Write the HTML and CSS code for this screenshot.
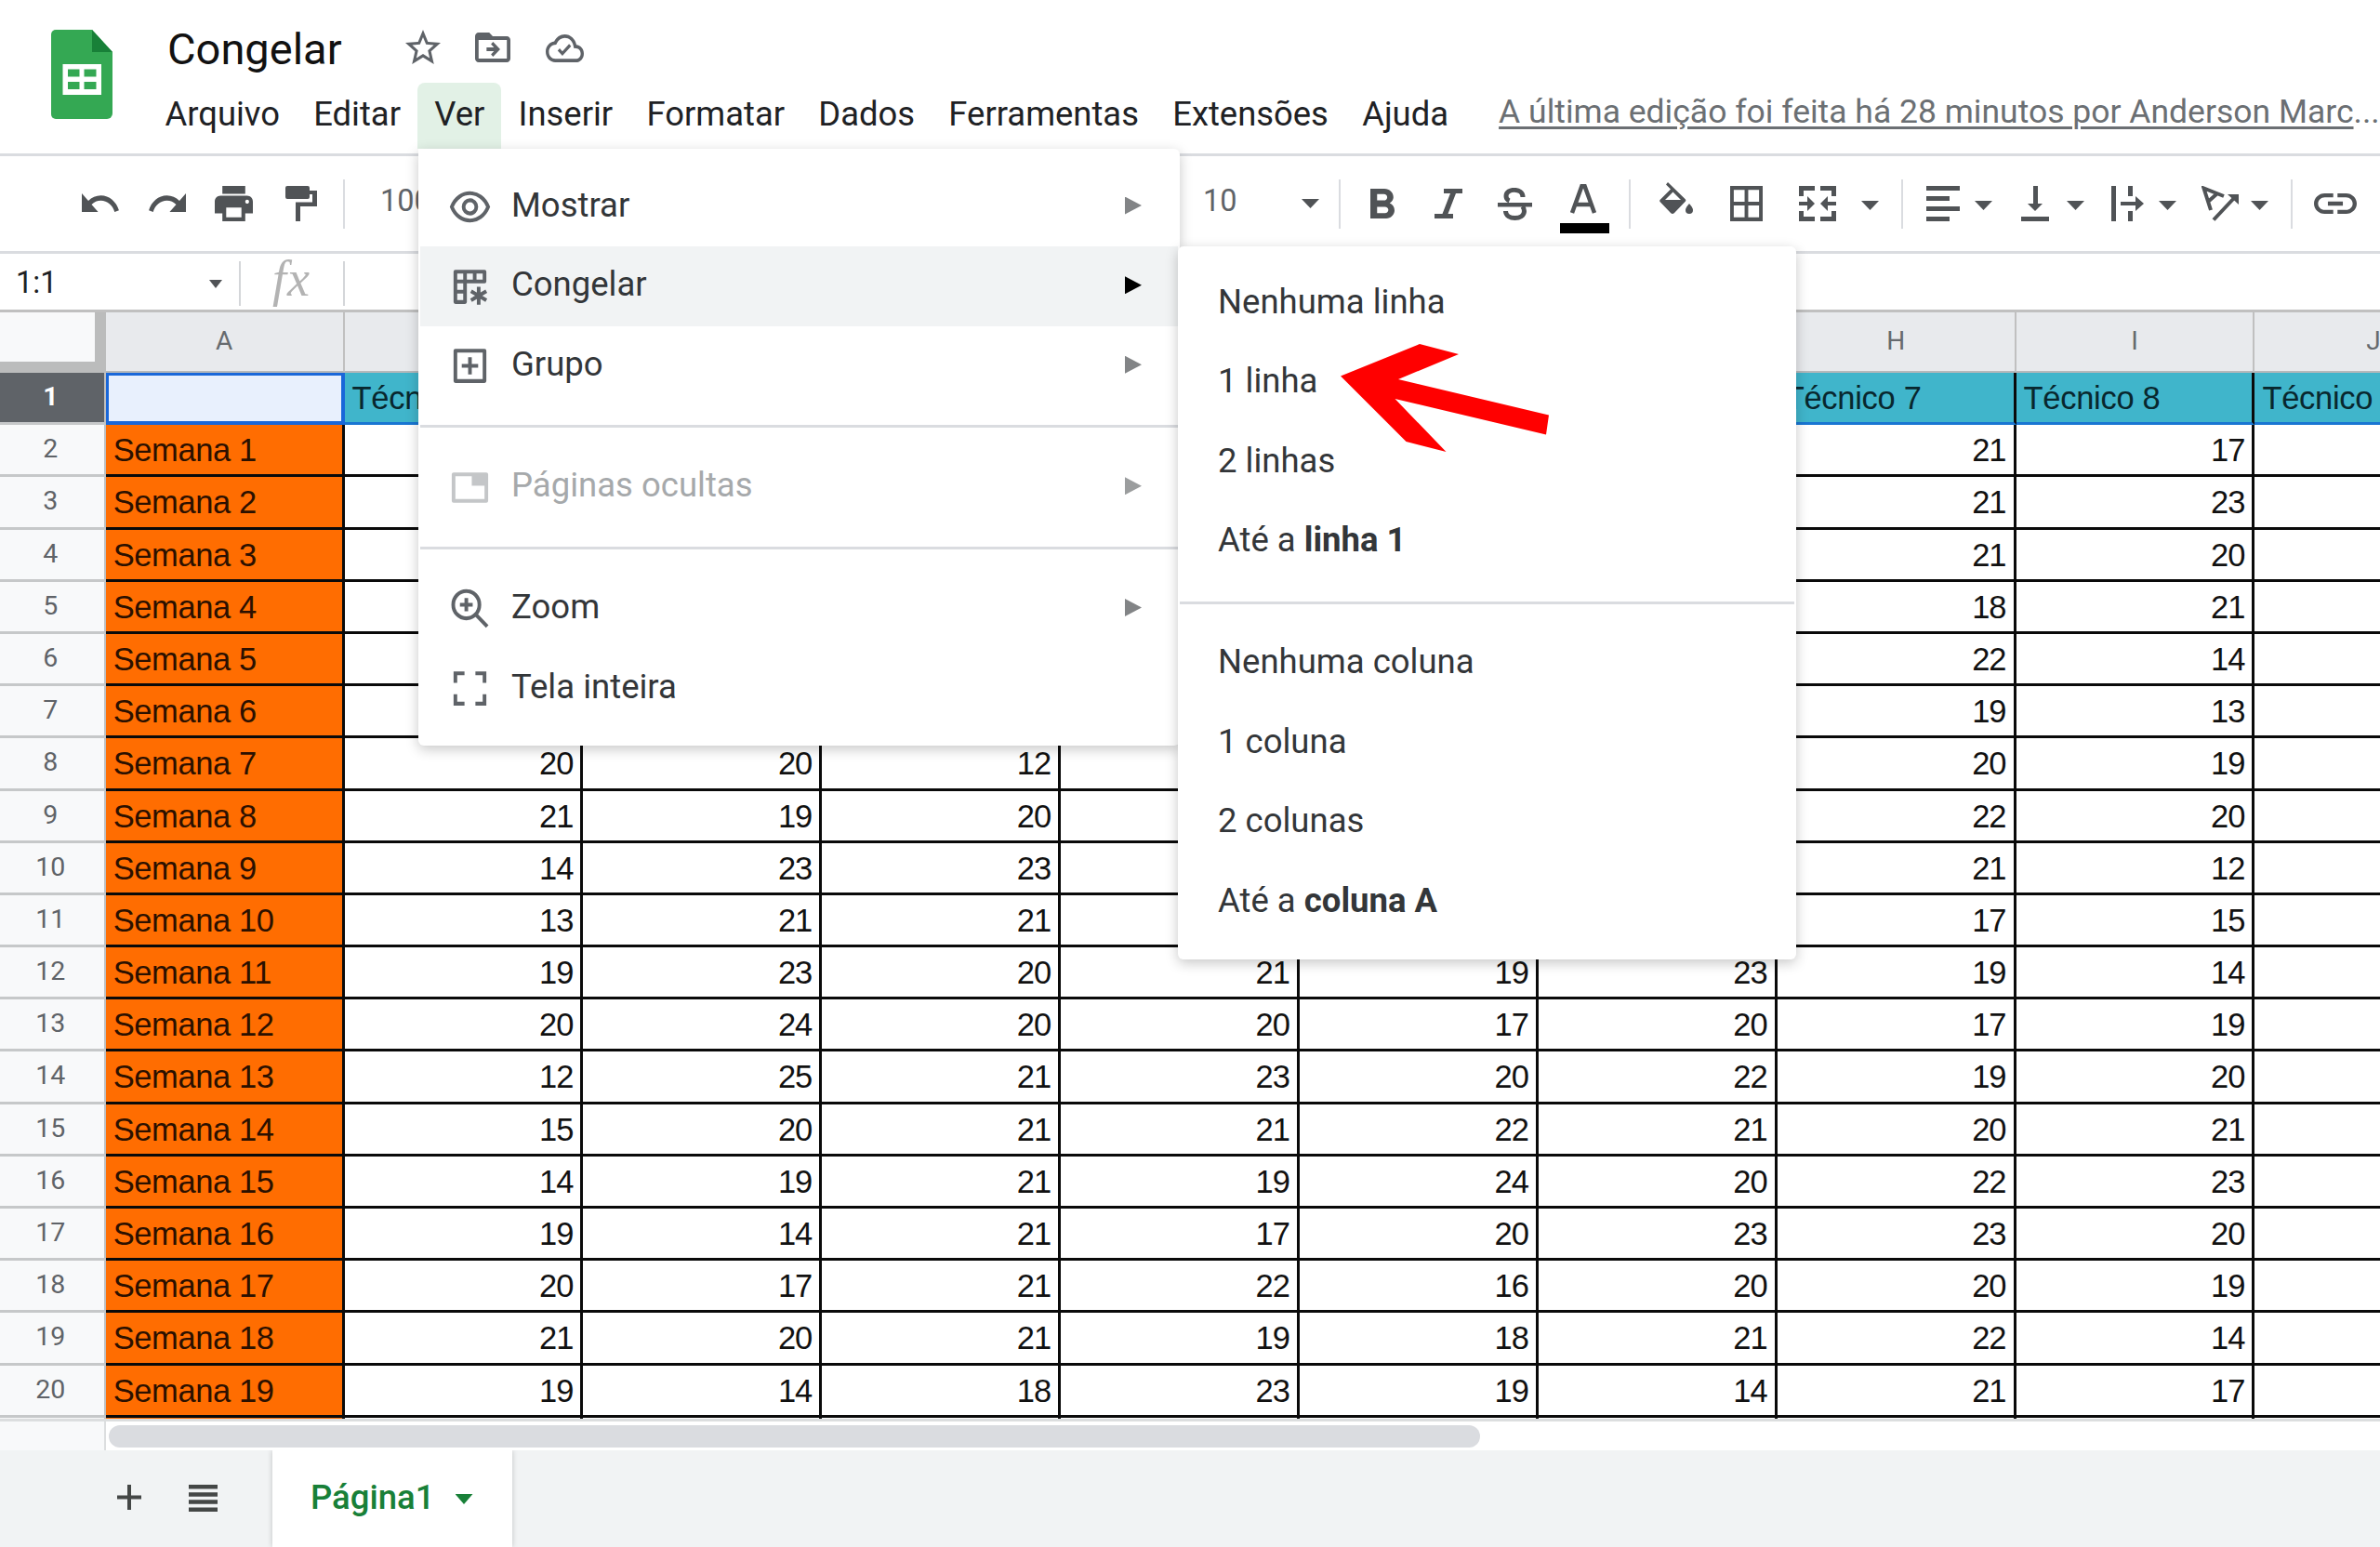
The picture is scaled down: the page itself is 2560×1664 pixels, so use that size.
FILE: index.html
```
<!DOCTYPE html>
<html lang="pt-BR">
<head>
<meta charset="utf-8">
<title>Congelar</title>
<link rel="stylesheet" href="styles.css">
</head>
<body>
<div class="app">
  <header class="top">
    <svg class="logo" viewBox="0 0 66 96"><path fill="#34a853" d="M5 0h39l22 24v66a6 6 0 0 1-6 6H5a5 5 0 0 1-5-5V5a5 5 0 0 1 5-5z"/><path fill="#188038" d="M44 0l22 24H44z"/><path fill="#fff" fill-rule="evenodd" d="M12.500 37h41.500v33H12.500zM18 42.500v8h12.500v-8zM35.500 42.500v8H48.500v-8zM18 56v8h12.500v-8zM35.500 56v8H48.500v-8z"/></svg>
    <div class="heading">
      <div class="title-row">
        <h1 class="title">Congelar</h1>
        <svg class="t-star" viewBox="2 2 20 19" preserveAspectRatio="none"><path d="M22 9.240l-7.190-.62L12 2 9.190 8.630 2 9.240l5.460 4.730L5.820 21 12 17.270 18.180 21l-1.630-7.030L22 9.240zM12 15.400l-3.760 2.270 1-4.280-3.320-2.880 4.380-.38L12 6.100l1.710 4.040 4.380.38-3.320 2.880 1 4.280L12 15.400z"/></svg>
        <svg class="t-folder" viewBox="2 4 20 16" preserveAspectRatio="none"><path d="M20 6h-8l-2-2H4c-1.100 0-2 .9-2 2v12c0 1.100.9 2 2 2h16c1.100 0 2-.9 2-2V8c0-1.100-.9-2-2-2zm0 12H4V8h16v10z"/><path d="M12.200 17l4-4-4-4-1.200 1.200 1.700 1.800H8.500v2h4.200L11 15.800z"/></svg>
        <svg class="t-cloud" viewBox="0 4 24 16" preserveAspectRatio="none"><path d="M19.350 10.040C18.670 6.590 15.640 4 12 4 9.110 4 6.600 5.640 5.350 8.040 2.340 8.360 0 10.910 0 14c0 3.310 2.690 6 6 6h13c2.760 0 5-2.240 5-5 0-2.640-2.050-4.780-4.650-4.960zM19 18H6c-2.210 0-4-1.790-4-4 0-2.050 1.530-3.760 3.560-3.970l1.070-.11.5-.95C8.080 7.140 9.940 6 12 6c2.620 0 4.880 1.860 5.390 4.430l.3 1.500 1.530.11c1.560.1 2.780 1.410 2.780 2.960 0 1.650-1.350 3-3 3z"/><path d="M10.500 16.300l-3-3 1.300-1.300 1.700 1.700 4.200-4.200 1.300 1.300z"/></svg>
      </div>
      <nav class="menubar">
        <span>Arquivo</span><span>Editar</span><span class="open">Ver</span><span>Inserir</span><span>Formatar</span><span>Dados</span><span>Ferramentas</span><span>Extensões</span><span>Ajuda</span>
        <a class="last-edit"><u>A última edição foi feita há 28 minutos por Anderson Marc</u>...</a>
      </nav>
    </div>
  </header>

  <div class="toolbar">
    <div class="tools-left">
      <svg class="i-undo" viewBox="2 7 20.500 9" preserveAspectRatio="none"><path d="M12.500 8c-2.650 0-5.050.99-6.900 2.600L2 7v9h9l-3.620-3.620c1.390-1.160 3.160-1.880 5.120-1.880 3.540 0 6.550 2.310 7.600 5.500l2.370-.78C21.080 11.030 17.150 8 12.500 8z"/></svg>
      <svg class="i-redo" viewBox="1.500 7 20.500 9" preserveAspectRatio="none"><path d="M18.400 10.600C16.550 8.990 14.150 8 11.500 8c-4.650 0-8.580 3.030-9.960 7.220L3.900 16c1.050-3.190 4.050-5.500 7.600-5.500 1.950 0 3.730.72 5.120 1.880L13 16h9V7l-3.600 3.600z"/></svg>
      <svg class="i-print" viewBox="2 3 20 18" preserveAspectRatio="none"><path d="M19 8H5c-1.660 0-3 1.340-3 3v6h4v4h12v-4h4v-6c0-1.660-1.340-3-3-3zm-3 11H8v-5h8v5zm3-7c-.55 0-1-.45-1-1s.45-1 1-1 1 .45 1 1-.45 1-1 1zm-1-9H6v4h12V3z"/></svg>
      <svg class="i-paint" viewBox="0 0 34 38" preserveAspectRatio="none"><path d="M2 0h22a2 2 0 0 1 2 2v3h8v17H16v16h-5V17.500h18V9h-3v3a2 2 0 0 1-2 2H2a2 2 0 0 1-2-2V2a2 2 0 0 1 2-2z"/></svg>
      <i class="sep"></i>
      <span class="tool-text">100%</span>
    </div>
    <span class="tool-text size">10</span>
    <i class="caret c-size"></i>
    <i class="sep s-size"></i>
    <svg class="i-bold" viewBox="7 5 10.750 14" preserveAspectRatio="none"><path d="M15.600 11.790c.97-.67 1.650-1.770 1.650-2.790 0-2.260-1.750-4-4-4H7v14h7.040c2.090 0 3.710-1.700 3.710-3.790 0-1.520-.86-2.820-2.150-3.420zM10 7.500h3c.83 0 1.500.67 1.500 1.500s-.67 1.500-1.500 1.500h-3v-3zm3.500 9H10v-3h3.500c.83 0 1.500.67 1.500 1.500s-.67 1.500-1.500 1.500z"/></svg>
    <svg class="i-italic" viewBox="0 0 30 32" preserveAspectRatio="none"><path d="M10 0h20v5h-7l-8.500 22H20v5H0v-5h8.500L17 5h-7z"/></svg>
    <svg class="i-strike" viewBox="0 0 37 35" preserveAspectRatio="none"><path d="M0 16h37v4.500H0z"/><path fill="none" stroke="#505356" stroke-width="5" d="M27 10c0-10-18-10-18-1 0 2 1 4 3.500 5M8.500 25c0 10 20 10 20 0 0-3-1-4-2-5"/></svg>
    <svg class="i-color" viewBox="0 0 53 53"><path fill="none" stroke="#505356" stroke-width="4.500" d="M13 31L23.500 2h3L37 31M17 22h16"/><path fill="#000" d="M0 42h53v11H0z"/></svg>
    <i class="sep s-color"></i>
    <svg class="i-fill" viewBox="0 0 36 34" preserveAspectRatio="none"><path fill-rule="evenodd" d="M9 0l18.500 18a2 2 0 0 1 0 3L16 33a3 3 0 0 1-4 0L1 21.500a2 2 0 0 1 0-3L12 7.500 7 2.500zM14.500 10.500L6 19h17z"/><path d="M32 23s4 4 4 7a4 4 0 0 1-8 0c0-3 4-7 4-7z"/></svg>
    <svg class="i-border" viewBox="3 3 18 18" preserveAspectRatio="none"><path d="M3 3v18h18V3H3zm8 16H5v-6h6v6zm0-8H5V5h6v6zm8 8h-6v-6h6v6zm0-8h-6V5h6v6z"/></svg>
    <svg class="i-merge" viewBox="0 0 40 38" preserveAspectRatio="none"><path d="M0 0h17v5H5v6H0zM40 0H23v5h12v6h5zM0 38h17v-5H5v-6H0zM40 38H23v-5h12v-6h5zM0 17h9v-6l8 8-8 8v-6H0zM40 17h-9v-6l-8 8 8 8v-6h9z"/></svg>
    <i class="caret c-merge"></i>
    <i class="sep s-merge"></i>
    <svg class="i-align" viewBox="0 0 36 38"><path d="M0 0h36v5H0zM0 11h25v5H0zM0 22h36v5H0zM0 33h25v5H0z"/></svg>
    <i class="caret c-near"></i>
    <svg class="i-valign" viewBox="0 0 30 38"><path d="M13 0h5v19h5l-8 8-8-8h6zM0 33h30v5H0z"/></svg>
    <i class="caret c-valign"></i>
    <svg class="i-wrap" viewBox="0 0 35 38"><path d="M0 0h5v38H0zM18 0h5v11h-5zM18 27h5v11h-5zM10 17h16v-6l9 8-9 8v-6H10z"/></svg>
    <i class="caret c-near"></i>
    <svg class="i-rotate" viewBox="0 0 40 38"><path fill="none" stroke="#505356" stroke-width="4" d="M24 11L2.500 2.500 10 26M7 17l9-8M13 36.500L36 12"/><path d="M28 9h12v11z"/></svg>
    <i class="caret c-rotate"></i>
    <i class="sep s-rotate"></i>
    <svg class="i-link" viewBox="2 7 20 10" preserveAspectRatio="none"><path d="M3.900 12c0-1.710 1.390-3.100 3.100-3.100h4V7H7c-2.760 0-5 2.240-5 5s2.240 5 5 5h4v-1.900H7c-1.710 0-3.100-1.390-3.100-3.100zM8.500 13h7v-2h-7v2zm8.500-6h-4v1.900h4c1.710 0 3.100 1.390 3.100 3.100s-1.390 3.100-3.100 3.100h-4V17h4c2.760 0 5-2.240 5-5s-2.240-5-5-5z"/></svg>
  </div>

  <div class="formula">
    <span class="name-box">1:1</span><i class="caret small"></i><i class="sep f1"></i><span class="fx">fx</span><i class="sep f2"></i>
  </div>

  <main class="sheet" id="sheet"></main>

  <div class="scroll"><div class="scroll-corner"></div><div class="scroll-thumb"></div></div>

  <footer class="tabs">
    <svg class="b-plus" viewBox="0 0 26 27"><path d="M11 0h4v11.500h11v4H15V27h-4V15.500H0v-4h11z"/></svg>
    <svg class="b-list" viewBox="0 0 31 29"><path d="M0 0h31v4.500H0zM0 8.200h31v4.500H0zM0 16.300h31v4.500H0zM0 24.500h31V29H0z"/></svg>
    <div class="tab">Página1<i class="caret green"></i></div>
  </footer>
</div>

<div class="menu main-menu">
  <div class="item"><svg class="mi" viewBox="0 0 24 24" preserveAspectRatio="none"><path fill="none" stroke="#5f6368" stroke-width="2" d="M2 12c4-9.600 16-9.600 20 0-4 9.600-16 9.600-20 0z"/><circle cx="12" cy="12" r="3.500" fill="none" stroke="#5f6368" stroke-width="2"/></svg>Mostrar<i class="arrow"></i></div>
  <div class="item hover"><svg class="mi" viewBox="0 0 24 24" preserveAspectRatio="none"><path fill="none" stroke="#5f6368" stroke-width="2" stroke-linejoin="round" d="M4 4h16v5.200H9.300V20H4zM9.300 4v5.200H4M14.600 4v5.200M4 14.600h5.300"/><path fill="none" stroke="#5f6368" stroke-width="2" d="M16.800 12v9.400M12.600 14.300l8.400 4.800M21 14.300l-8.400 4.800"/></svg>Congelar<i class="arrow"></i></div>
  <div class="item"><svg class="mi" viewBox="0 0 24 24" preserveAspectRatio="none"><path fill="none" stroke="#5f6368" stroke-width="2" stroke-linejoin="round" d="M4 4h16v16H4zM12 7.500v9M7.500 12h9"/></svg>Grupo<i class="arrow"></i></div>
  <hr>
  <div class="item off"><svg class="mi" viewBox="0 0 24 24" preserveAspectRatio="none"><path fill="none" stroke="#c4c6c8" stroke-width="2" stroke-linejoin="round" d="M3 5h18v14H3z"/><path fill="#c4c6c8" d="M13 5h8v6h-8z"/></svg>Páginas ocultas<i class="arrow"></i></div>
  <hr>
  <div class="item"><svg class="mi" viewBox="0 0 24 24" preserveAspectRatio="none"><circle cx="10" cy="10" r="7.200" fill="none" stroke="#5f6368" stroke-width="2"/><path fill="none" stroke="#5f6368" stroke-width="2" d="M15 15l6.500 6.500M10 6.500v7M6.500 10h7"/></svg>Zoom<i class="arrow"></i></div>
  <div class="item"><svg class="mi" viewBox="0 0 24 24" preserveAspectRatio="none"><path fill="none" stroke="#5f6368" stroke-width="2" d="M4 9V4h5M15 4h5v5M20 15v5h-5M9 20H4v-5"/></svg>Tela inteira</div>
</div>

<div class="menu sub-menu">
  <div class="item">Nenhuma linha</div>
  <div class="item">1 linha</div>
  <div class="item">2 linhas</div>
  <div class="item"><span>Até a <b>linha 1</b></span></div>
  <hr>
  <div class="item">Nenhuma coluna</div>
  <div class="item">1 coluna</div>
  <div class="item">2 colunas</div>
  <div class="item"><span>Até a <b>coluna A</b></span></div>
</div>

<svg class="pointer" viewBox="0 0 226 117"><path fill="#f00" d="M0 35.500L85 1l42 11-65 27 162 38.500-3 21L58.500 60 113.500 117 70.500 106z"/></svg>
<script src="sheet.js"></script>
</body>
</html>
```
FILE: styles.css
```
* { box-sizing: border-box; }
html, body { margin: 0; width: 2560px; height: 1664px; overflow: hidden; background: #fff; }
body { position: relative; font-family: Roboto, "Liberation Sans", sans-serif; color: #202124; }
svg { display: block; flex: none; fill: #444746; }
.app { display: flex; flex-direction: column; width: 2560px; height: 1664px; overflow: hidden; }

.top { display: flex; height: 168px; border-bottom: 3px solid #dadce0; flex: none; }
.logo { width: 66px; height: 96px; margin: 32px 0 0 55px; }
.heading { margin-left: 39px; }
.title-row { display: flex; height: 89px; }
.title-row svg { fill: #5f6368; }
.title { margin: 0 0 0 20px; width: 256px; font-size: 47px; font-weight: 400; line-height: 54px; padding-top: 26px; color: #111; }
.t-star { width: 38px; height: 37px; margin-top: 32px; }
.t-folder { width: 38px; height: 32px; margin: 35px 0 0 37px; }
.t-cloud { width: 41px; height: 30px; margin: 37px 0 0 38px; }
.menubar { display: flex; height: 71px; font-size: 36.400px; line-height: 68px; white-space: nowrap; color: #202124; }
.menubar span { padding: 0 18.150px; }
.menubar span:first-child { padding-left: 17.500px; }
.menubar .open { background: #e2f1e6; border-radius: 8px 8px 0 0; }
.last-edit { margin-left: 36px; font-size: 35.500px; line-height: 63px; color: #6b6f73; }
.last-edit u { text-decoration-thickness: 2.500px; text-underline-offset: 4px; }

.toolbar { display: flex; align-items: flex-start; height: 106px; margin-top: -1px; border-bottom: 3px solid #dadce0; flex: none; color: #5f6368; }
.toolbar svg { fill: #505356; }
.tools-left { display: flex; align-items: flex-start; width: 1294px; }
.tool-text { font-size: 32.500px; line-height: 38px; margin-top: 30px; }
.tools-left .tool-text { margin-left: 38px; }
.sep { display: block; flex: none; width: 2px; height: 53px; margin-top: 26px; background: #dadce0; }
.tools-left .sep { margin-left: 28px; }
.caret { display: block; flex: none; width: 19px; height: 10px; margin-top: 49px; background: #505356; clip-path: polygon(0 0, 100% 0, 50% 100%); }
.i-undo { width: 40px; height: 20px; margin: 41px 0 0 88px; }
.i-redo { width: 40px; height: 20px; margin: 41px 0 0 32px; }
.i-print { width: 41px; height: 38px; margin: 33px 0 0 31px; }
.i-paint { width: 34px; height: 38px; margin: 33px 0 0 35px; }
.size { width: 106px; }
.c-size { margin-top: 47px; }
.s-size { margin-left: 21px; }
.i-bold { width: 26px; height: 32px; margin: 36px 0 0 32px; }
.i-italic { width: 30px; height: 32px; margin: 36px 0 0 43px; }
.i-strike { width: 37px; height: 35px; margin: 35px 0 0 38px; }
.i-color { width: 53px; height: 53px; margin: 31px 0 0 30px; }
.s-color { margin-left: 21px; }
.i-fill { width: 36px; height: 34px; margin: 29px 0 0 31px; }
.i-border { width: 35px; height: 38px; margin: 33px 0 0 40px; }
.i-merge { width: 40px; height: 38px; margin: 33px 0 0 39px; }
.c-merge { margin-left: 27px; }
.s-merge { margin-left: 24px; }
.i-align { width: 36px; height: 38px; margin: 33px 0 0 25px; }
.c-near { margin-left: 16px; }
.i-valign { width: 30px; height: 38px; margin: 33px 0 0 31px; }
.c-valign { margin-left: 19px; }
.i-wrap { width: 35px; height: 38px; margin: 33px 0 0 29px; }
.i-rotate { width: 40px; height: 38px; margin: 33px 0 0 27px; }
.c-rotate { margin-left: 13px; }
.s-rotate { margin-left: 24px; }
.i-link { width: 46px; height: 22px; margin: 41px 0 0 23px; }

.formula { display: flex; height: 63px; border-bottom: 3px solid #c0c0c0; flex: none; }
.name-box { width: 225px; padding-left: 17px; font-size: 32.500px; line-height: 62px; }
.small { width: 14px; height: 9px; margin-top: 28px; }
.f1, .f2 { height: 48px; margin-top: 8px; background: #d4d6d9; }
.f1 { margin-left: 18px; }
.fx { width: 110px; padding-left: 34px; font: italic 54px/54px "Liberation Serif", serif; letter-spacing: 1px; color: #b3b3b3; }

.sheet { display: grid; grid-template-columns: 113.700px repeat(10, 256.860px); grid-template-rows: 65px; grid-auto-rows: 56.200px; height: 1190px; overflow: hidden; flex: none; width: 2560px; }
.corner { background: #f8f9fa; border: solid #bbbcbc; border-width: 0 12px 12px 0; }
.col { background: #e8eaed; border-right: 2px solid #c0c0c0; border-bottom: 2px solid #b5b8ba; text-align: center; font-size: 28px; line-height: 61px; color: #666a6e; }
.row { background: #f8f9fa; border-right: 2px solid #c0c0c0; border-bottom: 3px solid #c6c8c9; text-align: center; padding-right: 3px; font-size: 28.500px; line-height: 51px; color: #5f6368; }
.row.sel { background: #5f6368; color: #fff; font-weight: 700; }
.cell { border-right: 3px solid #0a0a0a; border-bottom: 3px solid #0a0a0a; text-align: right; padding: 0 8px; font: 34.500px/55px "Liberation Sans", Arial, sans-serif; letter-spacing: -1px; color: #111; white-space: nowrap; overflow: hidden; }
.week { background: #ff6d01; text-align: left; padding: 0 8px; letter-spacing: -.4px; color: #2b1000; }
.tech { background: #40b5cb; border-bottom-color: #1976d2; text-align: left; padding: 0 8px; letter-spacing: -.3px; color: #08272e; }
.a1 { background: #e8f0fd; border: solid #1967d9; border-width: 3px 4px 4px 3px; }

.scroll { display: flex; height: 34px; border-top: 3px solid #dcdedf; flex: none; background: #fff; }
.scroll-corner { width: 114px; background: #f8f9fa; border-right: 2px solid #dcdedf; }
.scroll-thumb { width: 1475px; height: 24px; margin: 4px 0 0 3px; border-radius: 12px; background: #dadce0; }

.tabs { display: flex; flex: 1; background: #f1f3f4; }
.tabs svg { fill: #444746; }
.b-plus { width: 26px; height: 27px; margin: 37px 0 0 126px; }
.b-list { width: 31px; height: 29px; margin: 37px 0 0 51px; }
.tab { display: flex; width: 258px; margin-left: 59px; padding-left: 41px; background: #fff; box-shadow: 0 0 6px #00000033; font-size: 36.500px; font-weight: 500; line-height: 101px; color: #188038; clip-path: inset(0 -8px 0 -8px); }
.green { background: #188038; margin: 47px 0 0 22px; height: 11px; }

.menu { position: absolute; background: #fff; border-radius: 6px; padding: 19.500px 2px 0; box-shadow: 0 4px 14px #00000038; font-size: 36.500px; color: #333639; }
.main-menu { left: 450px; top: 160px; width: 819px; height: 642px; border-top-left-radius: 0; }
.sub-menu { left: 1267px; top: 265px; width: 665px; height: 767px; padding-top: 18.500px; }
.item { display: flex; align-items: center; height: 85.600px; padding-bottom: 4.500px; white-space: nowrap; }
.main-menu .item { padding-left: 30px; }
.sub-menu .item { padding-left: 41px; }
.hover { background: #f1f3f4; }
.off { color: #a6a9ab; }
.menu hr { margin: 21px 0; border: 0; height: 3px; background: #dadce0; }
.mi { width: 47px; height: 49px; margin: 5px 21px 0 0; }
.arrow { width: 18px; height: 19px; margin: 2px 39px 0 auto; background: #828486; clip-path: polygon(0 0, 100% 50%, 0 100%); }
.hover .arrow { background: #000; }
.off .arrow { background: #9b9d9e; }
.pointer { position: absolute; left: 1442px; top: 369px; width: 226px; height: 117px; }
```
FILE: sheet.js
```
const sheet = document.getElementById('sheet');
const add = (cls, text = '') => {
  const el = document.createElement('div');
  el.className = cls;
  el.textContent = text;
  sheet.append(el);
};

// Columns B to I, one line per week.
const weeks = [
  ['', '', '', '', '', '', 21, 17],
  ['', '', '', '', '', '', 21, 23],
  ['', '', '', '', '', '', 21, 20],
  ['', '', '', '', '', '', 18, 21],
  ['', '', '', '', '', '', 22, 14],
  ['', '', '', '', '', '', 19, 13],
  [20, 20, 12, '', '', '', 20, 19],
  [21, 19, 20, '', '', '', 22, 20],
  [14, 23, 23, '', '', '', 21, 12],
  [13, 21, 21, '', '', '', 17, 15],
  [19, 23, 20, 21, 19, 23, 19, 14],
  [20, 24, 20, 20, 17, 20, 17, 19],
  [12, 25, 21, 23, 20, 22, 19, 20],
  [15, 20, 21, 21, 22, 21, 20, 21],
  [14, 19, 21, 19, 24, 20, 22, 23],
  [19, 14, 21, 17, 20, 23, 23, 20],
  [20, 17, 21, 22, 16, 20, 20, 19],
  [21, 20, 21, 19, 18, 21, 22, 14],
  [19, 14, 18, 23, 19, 14, 21, 17],
];

add('corner');
for (const c of 'ABCDEFGHIJ') add('col', c);
add('row sel', '1');
add('cell a1');
for (let i = 1; i <= 9; i++) add('cell tech', 'Técnico ' + i);
weeks.forEach((values, i) => {
  add('row', String(i + 2));
  add('cell week', 'Semana ' + (i + 1));
  values.forEach(v => add('cell', String(v)));
  add('cell');
});
// Top edge of the row cut off by the scroll bar.
add('row');
add('cell week');
for (let i = 0; i < 9; i++) add('cell');
```
